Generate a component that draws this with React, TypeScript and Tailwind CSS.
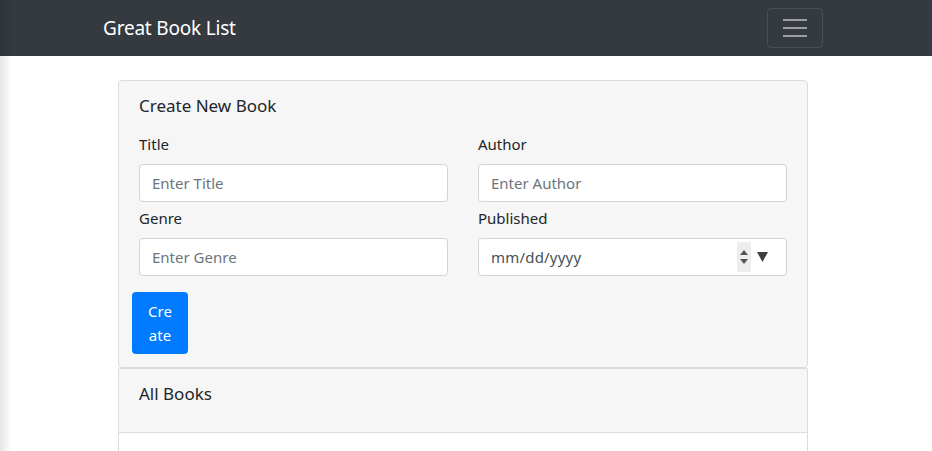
const FONT = "font-['Noto_Sans',_'Open_Sans',_sans-serif]";

function Field({ label, placeholder }: { label: string; placeholder: string }) {
  return (
    <div className="flex flex-col">
      <label className="text-[15px] leading-[22px] text-[#212529] mb-[9px]">{label}</label>
      <input
        type="text"
        placeholder={placeholder}
        className="h-[38px] w-full rounded-[4px] border border-[#ced4da] bg-white px-3 text-[15px] text-[#495057] placeholder:text-[#6c757d] outline-none"
      />
    </div>
  );
}

function DateField() {
  return (
    <div className="flex flex-col">
      <label className="text-[15px] leading-[22px] text-[#212529] mb-[9px]">Published</label>
      <div className="h-[38px] w-full rounded-[4px] border border-[#ced4da] bg-white pl-3 pr-[18px] flex items-center">
        <span className="text-[15px] text-[#495057] tracking-[0.2px]">mm/dd/yyyy</span>
        <span className="ml-auto flex items-center gap-[6px]">
          {/* spinner */}
          <span className="w-[14px] h-[30px] bg-[#ededed] flex flex-col items-center justify-center gap-[4px]">
            <svg width="8" height="5" viewBox="0 0 8 5"><path d="M0 5 L4 0 L8 5 Z" fill="#555" /></svg>
            <svg width="8" height="5" viewBox="0 0 8 5"><path d="M0 0 L4 5 L8 0 Z" fill="#555" /></svg>
          </span>
          <svg width="11" height="10" viewBox="0 0 11 10"><path d="M0 0 L11 0 L5.5 10 Z" fill="#3c4043" /></svg>
        </span>
      </div>
    </div>
  );
}

export default function App() {
  return (
    <div className={`${FONT} h-[451px] bg-white relative overflow-hidden`}>
      {/* left edge shade */}
      <div className="absolute left-0 top-0 bottom-0 w-[12px] bg-gradient-to-r from-black/10 to-transparent pointer-events-none z-10" />

      {/* Navbar */}
      <nav className="h-[56px] bg-[#343a40] flex items-center pl-[103px] pr-[109px]">
        <span className="text-white text-[19px] leading-none tracking-[-0.2px]">Great Book List</span>
        <button className="ml-auto w-[56px] h-[40px] rounded-[4px] border border-white/10 flex flex-col items-center justify-center gap-[6px]">
          <span className="block w-[24px] h-[2px] bg-white/50" />
          <span className="block w-[24px] h-[2px] bg-white/50" />
          <span className="block w-[24px] h-[2px] bg-white/50" />
        </button>
      </nav>

      <div className="pt-[24px] pl-[118px]">
        {/* Create card */}
        <div className="w-[690px] rounded-[4px] border border-[#dcdcdc] bg-[#f6f6f6] px-5 pt-[12px] pb-[13px]">
          <h2 className="text-[17px] leading-[26px] text-[#212529] mb-[14px]">Create New Book</h2>
          <div className="grid grid-cols-2 gap-x-[30px] gap-y-[5px]">
            <Field label="Title" placeholder="Enter Title" />
            <Field label="Author" placeholder="Enter Author" />
            <Field label="Genre" placeholder="Enter Genre" />
            <DateField />
          </div>
          <button className="mt-[16px] -ml-[7px] w-[56px] h-[62px] rounded-[4px] bg-[#007bff] text-white text-[15px] leading-[24px] px-3">
            Cre ate
          </button>
        </div>

        {/* All Books card */}
        <div className="w-[690px] border-x border-t-[2px] border-[#dcdcdc] rounded-t-[4px] -mt-px">
          <div className="h-[64px] bg-[#f6f6f6] border-b border-[#dcdcdc] px-5 pt-[12px]">
            <h2 className="text-[17px] leading-[26px] text-[#212529]">All Books</h2>
          </div>
          <div className="h-[18px] bg-white" />
        </div>
      </div>
    </div>
  );
}
